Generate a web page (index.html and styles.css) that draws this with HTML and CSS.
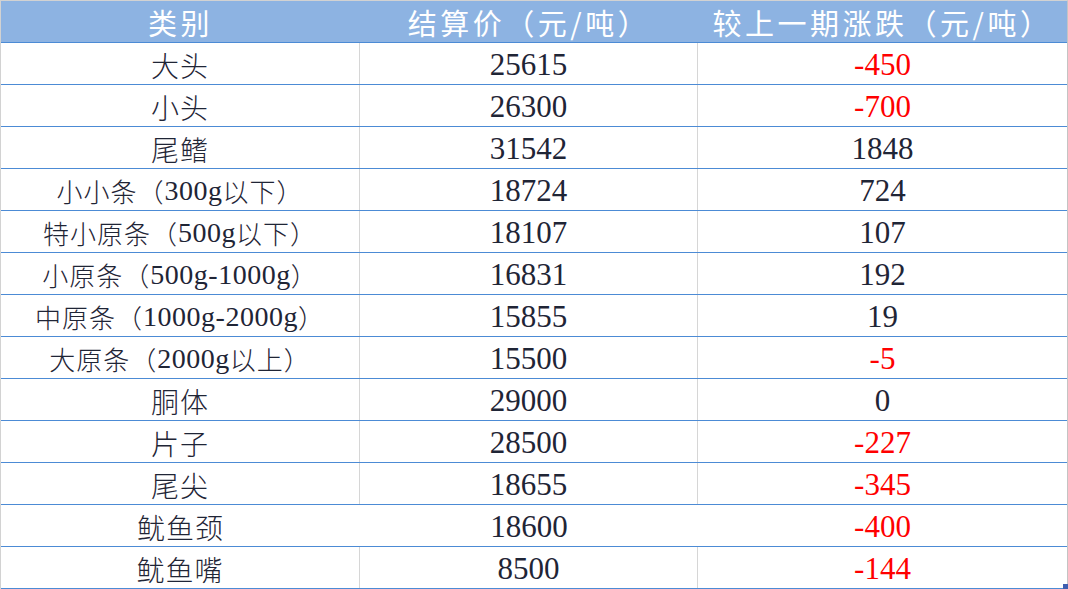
FILE: index.html
```html
<!DOCTYPE html>
<html lang="zh-CN">
<head>
<meta charset="utf-8">
<title>价格表</title>
<link rel="stylesheet" href="styles.css">
</head>
<body>
<div class="sheet">
  <div class="row head">
    <div class="cell">类别</div>
    <div class="cell">结算价（元/吨）</div>
    <div class="cell">较上一期涨跌（元/吨）</div>
  </div>
  <div class="row"><div class="cell">大头</div><div class="cell num">25615</div><div class="cell num neg">-450</div></div>
  <div class="row"><div class="cell">小头</div><div class="cell num">26300</div><div class="cell num neg">-700</div></div>
  <div class="row"><div class="cell">尾鳍</div><div class="cell num">31542</div><div class="cell num">1848</div></div>
  <div class="row"><div class="cell small">小小条（<span class="d">300g</span>以下）</div><div class="cell num">18724</div><div class="cell num">724</div></div>
  <div class="row"><div class="cell small">特小原条（<span class="d">500g</span>以下）</div><div class="cell num">18107</div><div class="cell num">107</div></div>
  <div class="row"><div class="cell small">小原条（<span class="d">500g-1000g</span>）</div><div class="cell num">16831</div><div class="cell num">192</div></div>
  <div class="row"><div class="cell small">中原条（<span class="d">1000g-2000g</span>）</div><div class="cell num">15855</div><div class="cell num">19</div></div>
  <div class="row"><div class="cell small">大原条（<span class="d">2000g</span>以上）</div><div class="cell num">15500</div><div class="cell num neg">-5</div></div>
  <div class="row"><div class="cell">胴体</div><div class="cell num">29000</div><div class="cell num">0</div></div>
  <div class="row"><div class="cell">片子</div><div class="cell num">28500</div><div class="cell num neg">-227</div></div>
  <div class="row"><div class="cell">尾尖</div><div class="cell num">18655</div><div class="cell num neg">-345</div></div>
  <div class="row nov"><div class="cell">鱿鱼颈</div><div class="cell num">18600</div><div class="cell num neg">-400</div></div>
  <div class="row"><div class="cell">鱿鱼嘴</div><div class="cell num">8500</div><div class="cell num neg">-144</div></div>
  <div class="handle"></div>
</div>
</body>
</html>
```
FILE: styles.css
```css
html, body {
  margin: 0;
  padding: 0;
  background: #ffffff;
}
body {
  width: 1068px;
  height: 589px;
  overflow: hidden;
  font-family: "Liberation Serif", "Noto Sans CJK SC", serif;
  color: #1f2536;
}
.sheet {
  position: relative;
  width: 1068px;
  box-sizing: border-box;
  border-top: 1px solid #d2d2d2;
  border-left: 1px solid #d2d2d2;
  border-right: 1px solid #c4c4c4;
}
.row {
  display: grid;
  grid-template-columns: 359px 338px 1fr;
  height: 42px;
  box-sizing: border-box;
  border-bottom: 1px solid #4c8bd5;
}
.cell {
  display: flex;
  align-items: center;
  justify-content: center;
  box-sizing: border-box;
  font-family: "Noto Sans CJK SC", sans-serif;
  font-weight: 300;
  font-size: 28px;
  letter-spacing: 1px;
  line-height: 1;
  white-space: nowrap;
  padding-top: 2px;
}
.row .cell:nth-child(1),
.row .cell:nth-child(2) {
  border-right: 1px solid #d6d6d6;
}
.row.head .cell,
.row.nov .cell {
  border-right: none;
}
.head {
  background: #8db3e2;
}
.head .cell {
  color: #ffffff;
  font-size: 29px;
  letter-spacing: 3.5px;
  font-weight: 400;
}
.cell.small {
  font-size: 26px;
  letter-spacing: 1px;
}
.cell .d,
.cell.num {
  font-family: "Liberation Serif", serif;
  font-weight: 400;
}
.cell.num {
  font-size: 31px;
  letter-spacing: 0;
}
.cell .d {
  font-size: 28px;
  letter-spacing: 0.5px;
}
.neg {
  color: #ff0000;
}
.handle {
  position: absolute;
  right: -1px;
  bottom: 0;
  width: 5px;
  height: 5px;
  background: #3f5fb0;
}
```
